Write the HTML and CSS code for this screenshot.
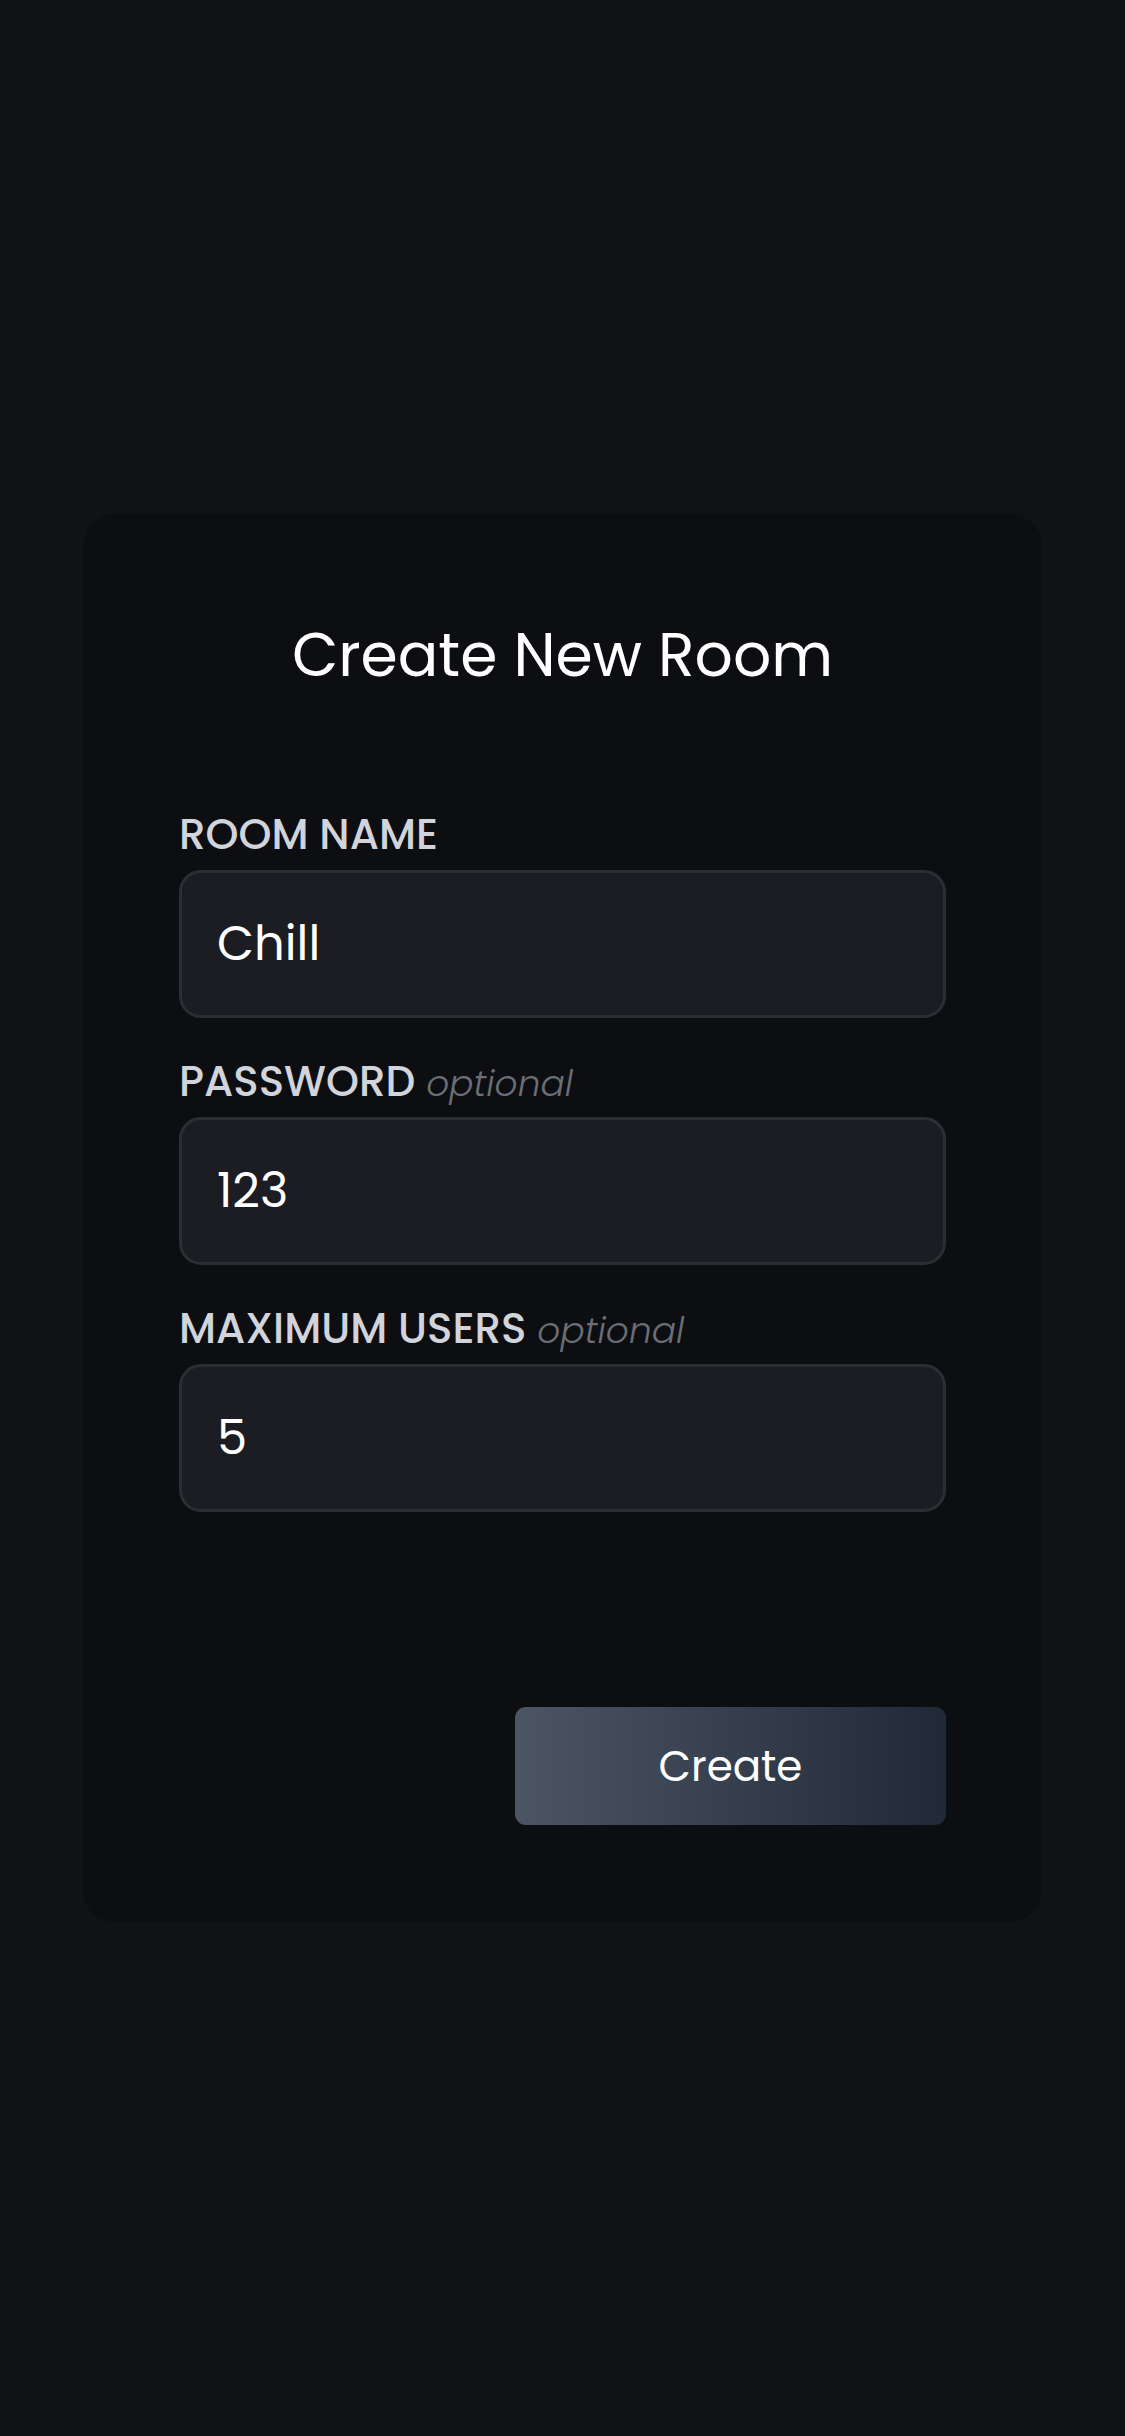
FILE: index.html
```html
<!DOCTYPE html>
<html lang="en">
<head>
<meta charset="utf-8">
<title>Create New Room</title>
<link rel="stylesheet" href="styles.css">
</head>
<body>
<main class="page">
  <form class="card">
    <h1 class="title">Create New Room</h1>
    <div class="fields">
      <div class="field">
        <label class="label">ROOM NAME</label>
        <div class="input">Chill</div>
      </div>
      <div class="field">
        <label class="label">PASSWORD <span class="opt">optional</span></label>
        <div class="input">123</div>
      </div>
      <div class="field">
        <label class="label">MAXIMUM USERS <span class="opt">optional</span></label>
        <div class="input">5</div>
      </div>
    </div>
    <div class="actions">
      <button type="button" class="btn">Create</button>
    </div>
  </form>
</main>
</body>
</html>
```

FILE: styles.css
```css
* { box-sizing: border-box; }
html, body { margin: 0; padding: 0; }
body {
  background: #111214;
  font-family: "Poppins", "Inter", "Noto Sans", sans-serif;
  color: #fff;
}
.page {
  min-height: 2436px;
  display: flex;
  align-items: center;
  justify-content: center;
  padding: 0 83px;
}
.card {
  width: 100%;
  background: #0d0e11;
  border-radius: 32px;
  padding: 96px 96px 97px;
  display: flex;
  flex-direction: column;
}
.title {
  margin: 0;
  text-align: center;
  font-weight: 400;
  font-size: 60px;
  line-height: 90px;
  color: #ffffff;
}
.fields {
  margin-top: 102px;
  display: flex;
  flex-direction: column;
  gap: 31px;
}
.field {
  display: flex;
  flex-direction: column;
  gap: 5px;
}
.label {
  padding-top: 3px;
  font-size: 42px;
  line-height: 60px;
  font-weight: 500;
  color: #d1d5db;
}
.opt {
  font-size: 36px;
  line-height: 1;
  font-style: italic;
  font-weight: 300;
  color: #6b6e75;
  text-transform: none;
}
.input {
  height: 148px;
  border: 3px solid #2c2e33;
  border-radius: 22px;
  background: #1b1d22;
  padding: 0 35px;
  display: flex;
  align-items: center;
  font-size: 48px;
  color: #ffffff;
}
.actions {
  margin-top: 195px;
  display: flex;
  justify-content: flex-end;
}
.btn {
  width: 431px;
  height: 118px;
  border: 0;
  border-radius: 11px;
  background: linear-gradient(90deg, #4b5563 0%, #1f2937 100%);
  color: #ffffff;
  font-family: inherit;
  font-size: 42px;
  font-weight: 400;
}
```
